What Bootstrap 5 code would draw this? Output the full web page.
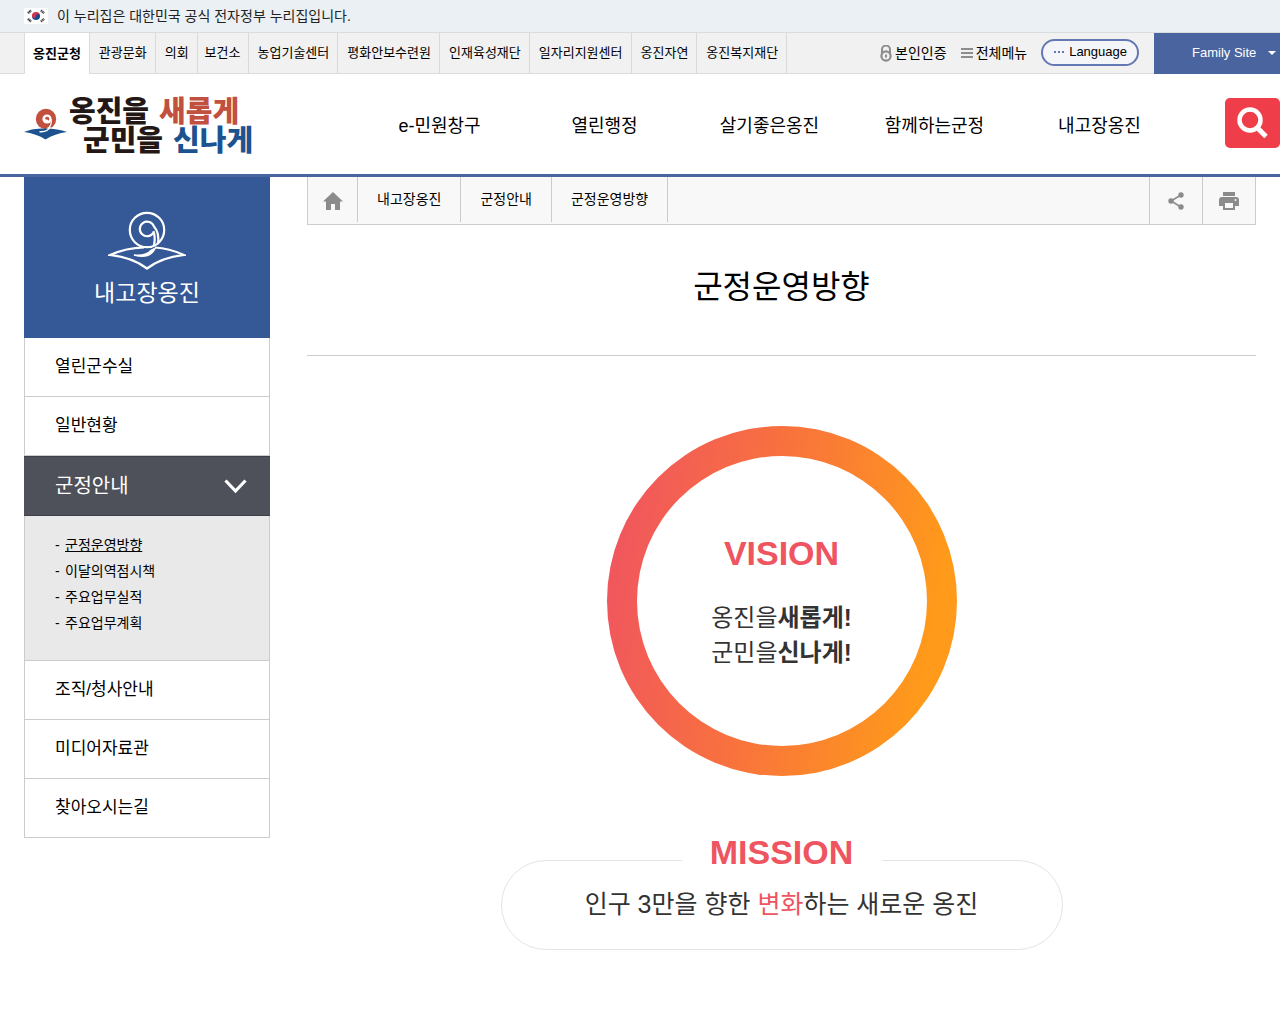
<!DOCTYPE html>
<html lang="ko">
<head>
<meta charset="utf-8">
<meta name="viewport" content="width=device-width, initial-scale=1">
<title>군정운영방향 - 옹진군청</title>
<link href="https://cdn.jsdelivr.net/npm/bootstrap@5.3.0/dist/css/bootstrap.min.css" rel="stylesheet">
<style>
  :root { --edge: 24px; --navy: #4a64a0; --line: #ccc; --coral: #ee5560; }
  body { font-family: "Liberation Sans", "Noto Sans CJK KR", sans-serif; font-size: 14px; line-height: 20px; color: #000; background: #fff; }
  a { color: inherit; text-decoration: none; }
  a:hover { text-decoration: underline; }
  svg { display: block; flex: none; }

  .gov-bar { background: #ebf0f4; height: 32px; padding: 0 var(--edge); color: #222; gap: 9px; }
  .gov-flag { background: #fff; }

  .site-bar { background: #f1f1f1; border-top: 1px solid #d9dcde; border-bottom: 1px solid #dcdcdc; padding-left: var(--edge); height: 42px; }
  .site-tabs { font-size: 13px; border-left: 1px solid #dcdcdc; }
  .site-tabs a { display: flex; align-items: center; height: 100%; padding: 0 8px 0 9px; border-right: 1px solid #d6dadd; white-space: nowrap; }
  .site-tabs .current { background: #fff; font-weight: 700; height: 41px; padding: 0 8px; }
  .site-tabs .tab-short { padding: 0 7px; }
  .util-link { gap: 3px; margin-right: 14px; }
  .lang-btn { border: 2px solid #6478b4; border-radius: 14px; background: #f4f5f8; height: 27px; padding: 0 10px; font-size: 13px; line-height: 20px; color: #000; margin-right: 15px; margin-bottom: 2px; }
  .family-btn { background: var(--navy); color: #fff; border: 0; border-radius: 0; width: 126px; height: 41px; font-size: 13px; padding: 0 4px 0 38px; }

  .main-head { border-bottom: 3px solid var(--navy); height: 103px; padding-left: var(--edge); }
  .brand-box { width: 333px; }
  .brand-text { font-weight: 900; font-size: 29px; line-height: 29px; color: #231815; white-space: nowrap; padding: 6px 0 0 2px; }
  .brand-line { display: flex; gap: 10px; }
  .brand-line + .brand-line { padding-left: 14px; }
  .brand-red { color: #c1503e; }
  .brand-blue { color: #1d5290; }
  .main-nav { font-size: 18px; line-height: 26px; padding-top: 3px; }
  .search-btn { background: #ef3e4a; border: 0; border-radius: 5px; width: 55px; height: 50px; margin: 0 0 2px 43px; padding: 0; }

  .page-wrap { padding: 0 var(--edge); gap: 37px; }
  .side-menu { width: 246px; flex: none; }
  .side-head { background: #355896; color: #fff; height: 161px; padding-top: 34px; }
  .side-head h2 { font-size: 23px; line-height: 32px; margin: 6px 0 0; font-weight: 400; }
  .side-list { border: solid var(--line); border-width: 0 1px; font-size: 17px; }
  .side-item { display: flex; align-items: center; height: 59px; padding: 0 30px; border-bottom: 1px solid var(--line); }
  .side-open { height: 60px; margin: 0 -1px; padding: 0 23px 0 31px; background: #4e5159; color: #fff; font-size: 20px; border: solid #3e3f49; border-width: 1px 0; }
  .side-sub { background: #e9e9e9; border-bottom: 1px solid var(--line); padding: 16px 30px 24px; font-size: 14px; line-height: 26px; }
  .side-sub li::before { content: "-"; display: inline-block; width: 10px; }

  .crumb-bar { background: #f8f8f8; border: 1px solid var(--line); border-top: 0; height: 48px; }
  .crumb-list { height: 45px; }
  .crumb-list > li { display: flex; align-items: center; padding: 0 19px 2px; border-right: 1px solid var(--line); }
  .crumb-list > .crumb-home { width: 50px; padding: 2px 0 0 15px; }
  .tool-btn { width: 53px; border: 0; border-left: 1px solid var(--line); background: none; padding: 0; display: flex; align-items: center; justify-content: center; }
  .page-title { font-size: 32px; line-height: 44px; font-weight: 400; margin: 0; padding: 40px 0 46px; border-bottom: 1px solid var(--line); text-align: center; }

  .vision-ring { width: 350px; height: 350px; padding: 30px; margin-top: 70px; border-radius: 50%; background: linear-gradient(100deg, #f0555f 5%, #f8703f 42%, #ff9a1a 88%); }
  .vision-core { border-radius: 50%; background: #fff; color: #333; }
  .point-title { font-size: 34px; line-height: 40px; font-weight: 700; color: var(--coral); margin: 0; }
  .vision-text { font-size: 24px; line-height: 35px; margin: 27px 0 0; }
  .mission-box { width: 562px; max-width: 100%; min-height: 90px; margin-top: 84px; border: 1px solid #e4e4e4; border-radius: 45px; color: #333; }
  .mission-box .point-title { width: 200px; margin-top: -29px; background: #fff; text-align: center; }
  .mission-text { font-size: 25px; line-height: 36px; margin: 14px 0 0; }
  .coral-text { color: var(--coral); }
</style>
</head>
<body>

<div class="gov-bar d-flex align-items-center">
  <svg class="gov-flag" width="24" height="16" viewBox="0 0 24 16" aria-hidden="true">
    <path d="M8 8a4 4 0 0 1 8 0z" fill="#d2324a"/><path d="M8 8a4 4 0 0 0 8 0z" fill="#1c4a91"/>
    <circle cx="10" cy="8" r="2" fill="#d2324a"/><circle cx="14" cy="8" r="2" fill="#1c4a91"/>
    <g stroke="#333" stroke-width="2.4" stroke-dasharray="1.2 .5"><path d="M4 5.200 7 2.400M17 2.400l3 2.800M4 10.800l3 2.800M17 13.600l3-2.800"/></g>
  </svg>
  <span>이 누리집은 대한민국 공식 전자정부 누리집입니다.</span>
</div>

<div class="site-bar d-flex justify-content-between">
  <ul class="site-tabs list-unstyled d-flex mb-0">
    <li><a class="current" href="#">옹진군청</a></li>
    <li><a href="#">관광문화</a></li>
    <li><a href="#">의회</a></li>
    <li><a class="tab-short" href="#">보건소</a></li>
    <li><a href="#">농업기술센터</a></li>
    <li><a href="#">평화안보수련원</a></li>
    <li><a href="#">인재육성재단</a></li>
    <li><a href="#">일자리지원센터</a></li>
    <li><a href="#">옹진자연</a></li>
    <li><a href="#">옹진복지재단</a></li>
  </ul>
  <div class="d-flex align-items-center text-nowrap">
    <a class="util-link d-flex align-items-center" href="#">
      <svg width="12" height="17" viewBox="0 0 12 17" fill="none" stroke="#8d8d8d" aria-hidden="true">
        <circle cx="6" cy="11" r="4.600" stroke-width="2.200"/><path d="M2 9V4.500a3.600 3.600 0 0 1 8 0V8" stroke-width="2"/><path d="M6 9.500v3" stroke-width="2"/>
      </svg>본인인증</a>
    <a class="util-link d-flex align-items-center" href="#">
      <svg width="12" height="12" viewBox="0 0 12 12" fill="#8d8d8d" aria-hidden="true"><path d="M0 1h12v2H0zM0 5h12v2H0zM0 9h12v2H0z"/></svg>전체메뉴</a>
    <button class="lang-btn d-flex align-items-center gap-1" type="button">
      <svg width="12" height="4" viewBox="0 0 12 4" fill="#6478b4" aria-hidden="true"><path d="M1 1h2v2H1zM5 1h2v2H5zM9 1h2v2H9z"/></svg>Language</button>
    <button class="family-btn d-flex align-items-center justify-content-between" type="button">Family Site
      <svg width="8" height="4" viewBox="0 0 8 4" fill="#fff" aria-hidden="true"><path d="M0 0h8L4 4z"/></svg></button>
  </div>
</div>

<header class="main-head d-flex align-items-center">
  <div class="brand-box flex-shrink-0">
    <a class="d-flex align-items-center" href="#">
      <svg width="43" height="32" viewBox="0 0 43 32" aria-hidden="true">
        <circle cx="22" cy="11" r="10.200" fill="#c1503e"/>
        <circle cx="23" cy="11" r="4.600" fill="#fff"/>
        <path d="M21 10.500a2.200 2.200 0 1 1 3.500 2.200c-.6-1-1.400-1.400-2.500-1z" fill="#c1503e"/>
        <path d="M27 11c1 4.500-.5 8-4.500 10" fill="none" stroke="#fff" stroke-width="1.300"/>
        <path fill="#1d5290" d="M0 24c6-2.600 12-3.600 21-3.600 9 0 16 1.200 22 3.600-8 1.200-15.500 3.500-21.500 7.500C15.500 27.500 8 25.200 0 24z"/>
        <path d="M26.500 18.500c-2 4-5.500 5.800-11 5.200" fill="none" stroke="#fff" stroke-width="1.400"/>
      </svg>
      <span class="brand-text">
        <span class="brand-line"><span>옹진을</span><span class="brand-red">새롭게</span></span>
        <span class="brand-line"><span>군민을</span><span class="brand-blue">신나게</span></span>
      </span>
    </a>
  </div>
  <nav class="flex-fill">
    <ul class="main-nav list-unstyled row g-0 mb-0 text-center text-nowrap">
      <li class="col"><a href="#">e-민원창구</a></li>
      <li class="col"><a href="#">열린행정</a></li>
      <li class="col"><a href="#">살기좋은옹진</a></li>
      <li class="col"><a href="#">함께하는군정</a></li>
      <li class="col"><a href="#">내고장옹진</a></li>
    </ul>
  </nav>
  <button class="search-btn d-flex align-items-center justify-content-center" type="button" aria-label="검색">
    <svg width="32" height="32" viewBox="0 0 32 32" fill="none" stroke="#fff" aria-hidden="true"><circle cx="13" cy="13" r="10.500" stroke-width="4.500"/><path d="M20 20.500l9 9" stroke-width="5"/></svg>
  </button>
</header>

<div class="page-wrap d-flex align-items-start">
  <aside class="side-menu">
    <div class="side-head d-flex flex-column align-items-center">
      <svg width="78" height="60" viewBox="0 0 78 60" fill="none" stroke="#fff" stroke-width="2.200" aria-hidden="true">
        <circle cx="39" cy="19" r="17.200"/>
        <path d="M45.500 21.500a7.300 7.300 0 1 1 .5-6c4 4.500 5 10.500 4 17.500M45.500 20c1.500 4.500 1.500 9.500.5 14.500"/>
        <path d="M36 36.300C23 36.600 12 39.500 2 44c15 1.500 27 6 37 13.500C49 50 61 45.500 76 44 66 39.500 57 37 47 36.500"/>
        <path d="M36 36.300h8M47 37.500c-3 6.500-10 9.500-21 6.500 7 .8 13.500-.5 17.500-5z" fill="#fff" stroke-width="1.500"/>
      </svg>
      <h2>내고장옹진</h2>
    </div>
    <nav class="side-list">
      <a class="side-item" href="#">열린군수실</a>
      <a class="side-item" href="#">일반현황</a>
      <a class="side-item side-open justify-content-between" href="#">군정안내
        <svg width="23" height="15" viewBox="0 0 23 15" fill="none" stroke="#fff" stroke-width="3.200" aria-hidden="true"><path d="M1.500 1.500l10 10.500 10-10.500"/></svg></a>
      <ul class="side-sub list-unstyled mb-0">
        <li><a class="text-decoration-underline" href="#">군정운영방향</a></li>
        <li><a href="#">이달의역점시책</a></li>
        <li><a href="#">주요업무실적</a></li>
        <li><a href="#">주요업무계획</a></li>
      </ul>
      <a class="side-item" href="#">조직/청사안내</a>
      <a class="side-item" href="#">미디어자료관</a>
      <a class="side-item" href="#">찾아오시는길</a>
    </nav>
  </aside>

  <main class="flex-fill">
    <div class="crumb-bar d-flex justify-content-between">
      <ol class="crumb-list list-unstyled d-flex mb-0">
        <li class="crumb-home"><a href="#" aria-label="홈"><svg width="20" height="18" viewBox="0 0 20 18" fill="#8b8b8b" aria-hidden="true"><path d="M10 0l10 9.500h-3V18h-5v-6H8v6H3V9.500H0z"/></svg></a></li>
        <li><a href="#">내고장옹진</a></li>
        <li><a href="#">군정안내</a></li>
        <li><a href="#">군정운영방향</a></li>
      </ol>
      <div class="d-flex">
        <button class="tool-btn" type="button" aria-label="공유">
          <svg width="16" height="18" viewBox="0 0 16 18" fill="#8b8b8b" aria-hidden="true"><path d="M13 3L3 9l10 6" fill="none" stroke="#8b8b8b" stroke-width="1.600"/><circle cx="13" cy="3" r="2.700"/><circle cx="3" cy="9" r="2.700"/><circle cx="13" cy="15" r="2.700"/></svg>
        </button>
        <button class="tool-btn" type="button" aria-label="인쇄">
          <svg width="20" height="18" viewBox="0 0 20 18" fill="#8b8b8b" aria-hidden="true"><path d="M4 0h12v4H4z"/><path fill-rule="evenodd" d="M3 5h14a3 3 0 0 1 3 3v6h-4v4H4v-4H0V8a3 3 0 0 1 3-3zm3 6v5h8v-5zM16.500 7a1 1 0 1 0 0 2 1 1 0 0 0 0-2z"/></svg>
        </button>
      </div>
    </div>

    <h1 class="page-title">군정운영방향</h1>

    <section class="vision-ring mx-auto">
      <div class="vision-core h-100 d-flex flex-column align-items-center justify-content-center">
        <h2 class="point-title">VISION</h2>
        <p class="vision-text">옹진을<strong>새롭게!</strong><br>군민을<strong>신나게!</strong></p>
      </div>
    </section>

    <section class="mission-box mx-auto d-flex flex-column align-items-center">
      <h2 class="point-title">MISSION</h2>
      <p class="mission-text">인구 3만을 향한 <span class="coral-text">변화</span>하는 새로운 옹진</p>
    </section>
  </main>
</div>

<script src="https://cdn.jsdelivr.net/npm/bootstrap@5.3.0/dist/js/bootstrap.bundle.min.js"></script>
</body>
</html>
